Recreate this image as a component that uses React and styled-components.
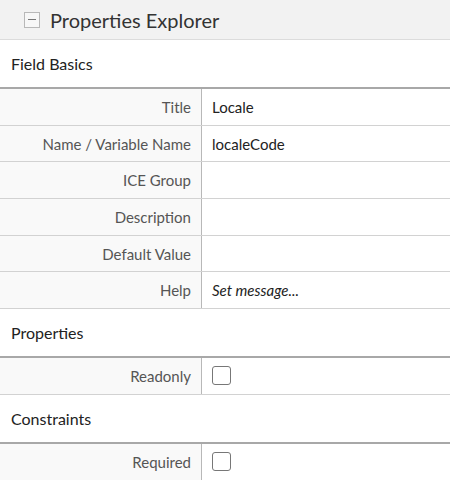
import React from 'react';
import styled, { createGlobalStyle } from 'styled-components';

const GlobalStyle = createGlobalStyle`
  html, body {
    margin: 0;
    padding: 0;
    background: #fff;
    font-family: Lato, "Open Sans", sans-serif;
  }
`;

const Panel = styled.div`
  width: 450px;
  height: 480px;
  overflow: hidden;
  background: #fff;
`;

const Header = styled.div`
  display: flex;
  align-items: center;
  gap: 10px;
  height: 40px;
  padding-left: 24px;
  background: #f2f2f2;
  border-bottom: 1px solid #dcdcdc;
  box-sizing: border-box;
`;

const CollapseIcon = styled.span`
  position: relative;
  display: inline-block;
  width: 14px;
  height: 14px;
  border: 1px solid #b8b8b8;
  background: #f7f7f7;

  &::after {
    content: '';
    position: absolute;
    left: 3px;
    right: 3px;
    top: 6px;
    height: 1px;
    background: #777;
  }
`;

const HeaderTitle = styled.h2`
  margin: 0;
  font-size: 20px;
  font-weight: 400;
  color: #333;
`;

const SectionTitle = styled.div`
  display: flex;
  align-items: center;
  height: ${({ $first }) => ($first ? '47px' : '47px')};
  padding-left: 11px;
  font-size: 16px;
  color: #222;
  box-sizing: border-box;
`;

const Table = styled.div`
  border-top: 2px solid #a8a8a8;
`;

const Row = styled.div`
  display: grid;
  grid-template-columns: 202px 1fr;
  height: 36.7px;
  border-bottom: 1px solid #d2d2d2;
  box-sizing: border-box;
`;

const Label = styled.div`
  display: flex;
  align-items: center;
  justify-content: flex-end;
  padding-right: 10px;
  background: #f9f9f9;
  border-right: 1px solid #b8b8b8;
  font-size: 15px;
  color: #555;
`;

const Value = styled.div`
  display: flex;
  align-items: center;
  padding-left: 10px;
  font-size: 15px;
  color: #222;
  font-style: ${({ $italic }) => ($italic ? 'italic' : 'normal')};
`;

const Checkbox = styled.span`
  display: inline-block;
  width: 17px;
  height: 17px;
  border: 1px solid #777;
  border-radius: 3px;
  background: #fff;
`;

const sections = [
  {
    title: 'Field Basics',
    rows: [
      { label: 'Title', value: 'Locale' },
      { label: 'Name / Variable Name', value: 'localeCode' },
      { label: 'ICE Group', value: '' },
      { label: 'Description', value: '' },
      { label: 'Default Value', value: '' },
      { label: 'Help', value: 'Set message...', italic: true },
    ],
  },
  {
    title: 'Properties',
    rows: [{ label: 'Readonly', checkbox: true }],
  },
  {
    title: 'Constraints',
    rows: [{ label: 'Required', checkbox: true }],
  },
];

export default function App() {
  return (
    <Panel>
      <GlobalStyle />
      <Header>
        <CollapseIcon />
        <HeaderTitle>Properties Explorer</HeaderTitle>
      </Header>
      {sections.map((section) => (
        <section key={section.title}>
          <SectionTitle>{section.title}</SectionTitle>
          <Table>
            {section.rows.map((row) => (
              <Row key={row.label}>
                <Label>{row.label}</Label>
                <Value $italic={row.italic}>
                  {row.checkbox ? <Checkbox /> : row.value}
                </Value>
              </Row>
            ))}
          </Table>
        </section>
      ))}
    </Panel>
  );
}
